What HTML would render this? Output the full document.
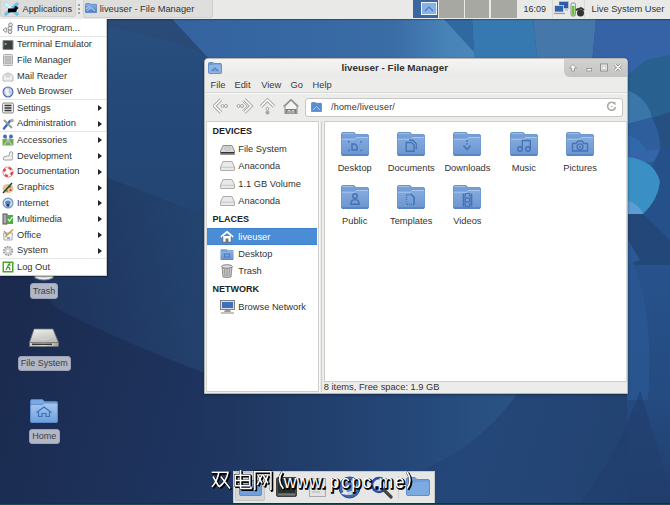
<!DOCTYPE html>
<html><head><meta charset="utf-8">
<style>
*{margin:0;padding:0;box-sizing:border-box}
html,body{width:670px;height:505px;overflow:hidden}
body{position:relative;font-family:"Liberation Sans",sans-serif;background:#1f3358;color:#3a3a3a}
.abs{position:absolute}
#wall{position:absolute;left:0;top:0;width:670px;height:505px}
/* panel */
#panel{position:absolute;left:0;top:0;width:670px;height:19px;background:#e9e9e7;box-shadow:0 1px 1px rgba(0,0,0,0.25)}
.t{position:absolute;white-space:nowrap;font-size:9px;line-height:11px}
/* menu */
#menu{position:absolute;left:0;top:19px;width:107px;height:257px;background:#fff;border-right:1px solid #c8c8c8;border-bottom:1px solid #c8c8c8;box-shadow:1px 1px 1px rgba(0,0,0,0.3)}
.mi{position:absolute;left:17px;font-size:9.3px;line-height:11px;color:#333;white-space:nowrap}
.sep{position:absolute;left:0;width:106px;height:1px;background:#e6e6e6}
.arr{position:absolute;left:98px;width:0;height:0;border-top:3px solid transparent;border-bottom:3px solid transparent;border-left:4px solid #222}
/* window */
#win{position:absolute;left:204px;top:58px;width:424px;height:336px;background:#ececeb;border:1px solid #b5b5b3;border-radius:4px 4px 0 0;box-shadow:0 1px 3px rgba(0,0,0,0.35)}
.lbl{position:absolute;font-size:9.3px;line-height:11px;color:#333;white-space:nowrap;text-align:center}
.dlab{position:absolute;background:#b1b7c6;border:1px solid #9aa1b4;border-radius:3px;font-size:9px;line-height:13px;color:#3e3e3e;text-align:center;white-space:nowrap}
</style></head><body>
<svg id="wall" viewBox="0 0 670 505">
 <defs>
  <linearGradient id="g0" x1="0" y1="0" x2="0.25" y2="1">
   <stop offset="0" stop-color="#2b5288"/><stop offset="0.45" stop-color="#254675"/><stop offset="1" stop-color="#1e3056"/>
  </linearGradient>
  <linearGradient id="gtop" x1="0" y1="0" x2="1" y2="0">
   <stop offset="0" stop-color="#3463a0"/><stop offset="0.7" stop-color="#3a6ca6"/><stop offset="0.86" stop-color="#4783b7"/><stop offset="1" stop-color="#4a88ba"/>
  </linearGradient>
  <radialGradient id="gbr" cx="560" cy="385" r="560" gradientUnits="userSpaceOnUse" gradientTransform="translate(560,385) scale(1,0.75) translate(-560,-385)">
   <stop offset="0" stop-color="#2b5688"/><stop offset="0.3" stop-color="#25487a"/><stop offset="0.62" stop-color="#1f3560"/><stop offset="1" stop-color="#1a2a4e"/>
  </radialGradient>
  <linearGradient id="grs" x1="0" y1="0" x2="0" y2="1"><stop offset="0" stop-color="#27528b"/><stop offset="0.5" stop-color="#254c82"/><stop offset="1" stop-color="#203d6c"/></linearGradient>
  <linearGradient id="gb1" x1="0" y1="300" x2="670" y2="505" gradientUnits="userSpaceOnUse"><stop offset="0" stop-color="#1b2a4e"/><stop offset="0.35" stop-color="#1e3560"/><stop offset="0.7" stop-color="#244779"/><stop offset="1" stop-color="#22426f"/></linearGradient>
  <linearGradient id="gb2" x1="230" y1="0" x2="556" y2="0" gradientUnits="userSpaceOnUse"><stop offset="0" stop-color="#1f3760"/><stop offset="0.6" stop-color="#25497b"/><stop offset="1" stop-color="#2c5988"/></linearGradient>
  <linearGradient id="glf" x1="0" y1="19" x2="0" y2="280" gradientUnits="userSpaceOnUse"><stop offset="0" stop-color="#2a4a78"/><stop offset="1" stop-color="#22436f"/></linearGradient>
  <linearGradient id="glf2" x1="0" y1="27" x2="0" y2="280" gradientUnits="userSpaceOnUse"><stop offset="0" stop-color="#284f7e"/><stop offset="0.35" stop-color="#244877"/><stop offset="1" stop-color="#224372"/></linearGradient>
  <clipPath id="cpb"><rect x="205" y="394" width="422" height="111"/></clipPath>
  <linearGradient id="gwd" x1="30" y1="300" x2="205" y2="260" gradientUnits="userSpaceOnUse"><stop offset="0" stop-color="#1e3259"/><stop offset="0.5" stop-color="#203a65"/><stop offset="1" stop-color="#23446f"/></linearGradient>
  <linearGradient id="gbot" x1="0" y1="0" x2="1" y2="0">
   <stop offset="0" stop-color="#213a66"/><stop offset="0.6" stop-color="#264a7b"/><stop offset="1" stop-color="#2b5a8e"/>
  </linearGradient>
 </defs>
 <rect width="670" height="505" fill="url(#g0)"/>
 <!-- top strip -->
 <polygon points="172,19 444,19 481,58 490,120 208,120 208,58" fill="url(#gtop)"/>
 <polygon points="107,19 172,19 208,58 208,280 107,280" fill="url(#glf)"/>
 <path d="M107,27 Q160,36 200,52 L208,58 L208,280 L107,280 Z" fill="url(#glf2)"/>
 <polygon points="444,19 472,19 474,52" fill="#3068a2"/>
 <polygon points="472,19 533,19 544,120 481,120 474,52" fill="#3579b0"/>
 <polygon points="533,19 596,19 587,120 544,120" fill="#4677aa"/>
 <polygon points="596,19 670,19 670,38 642,58 628,120 587,120" fill="#3563a5"/>
 <polygon points="670,38 670,120 628,120 642,58" fill="#27578a"/>
 <!-- right strip -->
 <rect x="627" y="55" width="43" height="210" fill="#28608f"/>
 <polygon points="627,55 670,38 670,55 646,60 627,76" fill="#3563a8"/>
 <path d="M627,90 Q648,98 652,118 L627,124 Z" fill="#3a77a8"/>
 <polygon points="627,124 670,112 670,160 627,160" fill="#2e5f9c"/>
 <path d="M652,118 Q662,135 660,160 L670,160 L670,112 Z" fill="#264f82"/>
 <path d="M627,135 Q645,140 650,160 L627,160 Z" fill="#3068ac"/>
 <rect x="627" y="150" width="33" height="12" fill="#3565a8"/>
 <polygon points="660,150 670,150 670,265 627,265 627,215" fill="#25508a"/>
 <path d="M627,157 Q655,160 660,182 Q658,200 643,214 L627,214 Z" fill="#3a90c4"/>
 <path d="M627,200 Q640,205 643,214 Q638,228 627,238 Z" fill="#5c9dd4"/>
 <polygon points="627,214 643,214 670,240 670,265 627,265" fill="#24477a"/>
 <polygon points="627,238 640,260 627,265" fill="#2a5a95"/>
 <!-- bottom -->
 <path d="M0,276 L107,276 L107,178 Q160,198 205,217 L205,394 L627,394 L627,505 L0,505 Z" fill="url(#gb1)"/>
 <circle cx="340" cy="270" r="216" fill="url(#gb2)" clip-path="url(#cpb)"/>
 <path d="M627,265 L670,265 L670,505 L627,505 Z" fill="url(#grs)"/>
 <path d="M627,250 Q655,300 648,400 L627,400 Z" fill="#2b5892" opacity="0.8"/>
 <path d="M640,390 Q620,450 579,505 L670,505 L670,490 Z" fill="#213d6c" opacity="0.6"/>
 <path d="M107,178 Q160,198 205,217 L205,373 Q130,345 63,312 Q45,300 30,276 L107,276 Z" fill="url(#gwd)"/>
 
</svg>

<!-- top panel -->
<div id="panel">
 <div class="abs" style="left:0;top:0;width:76px;height:17px;background:#dcdcda;border:1px solid #d0d0ce;border-top:none;border-radius:0 0 3px 3px"></div>
 <svg class="abs" style="left:3px;top:2px" width="17" height="14" viewBox="0 0 17 14">
  <path d="M3,2 L14,12 M14,2 L3,12" stroke="#66c4ec" stroke-width="3.4" stroke-linecap="round"/>
  <path d="M3,2 L7,5.5" stroke="#d8f2fc" stroke-width="3" stroke-linecap="round"/>
  <path d="M5,6.5 L11,6.5 L12,4 L14,4.5 L15.5,6 L14,7.5 L13,10 L5,10.5 Z" fill="#000"/>
 </svg>
 <div class="t" style="left:22.5px;top:3.5px;color:#333;font-size:9.2px">Applications</div>
 <div class="abs" style="left:78px;top:4px;width:2px;height:2px;background:#a0a09e"></div>
 <div class="abs" style="left:78px;top:8px;width:2px;height:2px;background:#a0a09e"></div>
 <div class="abs" style="left:78px;top:12px;width:2px;height:2px;background:#a0a09e"></div>
 <div class="abs" style="left:83px;top:0;width:130px;height:17.5px;background:#dededc;border:1px solid #d0d0ce;border-top:none;border-radius:0 0 3px 3px"></div>
 <svg class="abs" style="left:85px;top:3px" width="12" height="10" viewBox="0 0 12 10"><defs><linearGradient id="tbf" x1="0" y1="0" x2="0" y2="1"><stop offset="0" stop-color="#8ab4e8"/><stop offset="1" stop-color="#4a80c8"/></linearGradient></defs><path d="M0.5,1.2 Q0.5,0.5 1.2,0.5 L4.5,0.5 L5.5,1.3 L11,1.3 Q11.5,1.3 11.5,2 L11.5,9.5 L0.5,9.5 Z" fill="url(#tbf)" stroke="#3f70b6" stroke-width="0.6"/><path d="M2,8 L6,4.5 L10,8 M1,6 L5,3" stroke="#c4dcf6" stroke-width="0.9" fill="none"/></svg>
 <div class="t" style="left:99.8px;top:3.5px;color:#333;font-size:9.3px">liveuser - File Manager</div>
 <!-- workspaces -->
 <div class="abs" style="left:413px;top:0;width:25px;height:18px;background:#3b679e"></div>
 <div class="abs" style="left:421px;top:1.5px;width:16px;height:13px;background:#86b2e6;border:1px solid #e8f2ff"></div>
 <svg class="abs" style="left:424px;top:4px" width="10" height="8" viewBox="0 0 10 8"><path d="M1,7 L5,3 L9,7" stroke="#4a7cc0" stroke-width="1.2" fill="none"/></svg>
 <div class="abs" style="left:438.5px;top:0;width:25.5px;height:18px;background:#a8a8a3"></div>
 <div class="abs" style="left:465px;top:0;width:24px;height:18px;background:#a8a8a3"></div>
 <div class="abs" style="left:490.5px;top:0;width:26.5px;height:18px;background:#a8a8a3"></div>
 <div class="t" style="left:523.5px;top:3.5px;color:#333">16:09</div>
 <div class="abs" style="left:552px;top:0;width:33px;height:18px;border-left:1px solid #d8d8d6;border-right:1px solid #d8d8d6;background:#e9e9e8"></div>
 <svg class="abs" style="left:554px;top:1px" width="15" height="14" viewBox="0 0 15 14">
  <rect x="5" y="0.5" width="9.5" height="7" fill="#2a5aa8" stroke="#ccc" stroke-width="0.6"/>
  <rect x="0.5" y="4.5" width="9" height="6.5" fill="#2f62b0" stroke="#ddd" stroke-width="0.8"/>
  <path d="M0,12.5 h11" stroke="#999" stroke-width="1.2"/><path d="M11,9 h3" stroke="#aaa" stroke-width="1"/>
 </svg>
 <svg class="abs" style="left:570px;top:1.5px" width="15" height="15" viewBox="0 0 15 15">
  <rect x="1" y="1" width="4.5" height="13" rx="1.5" fill="#e8e8e8" stroke="#777" stroke-width="0.8"/>
  <rect x="2" y="4" width="2.5" height="9.5" fill="#6abf40"/>
  <circle cx="10.5" cy="11" r="3.5" fill="#333"/><path d="M6,8 L11,6 L14,8" stroke="#333" stroke-width="2" fill="none"/>
 </svg>
 <div class="t" style="left:591.5px;top:3.5px;color:#333;font-size:9.3px">Live System User</div>
</div>

<!--DESK-->
<!-- Trash icon bottom (peeking below menu) -->
<svg class="abs" style="left:33px;top:266px" width="22" height="15" viewBox="0 0 22 15"><path d="M1,0 L21,0 L20,12 Q11,16 2,12 Z" fill="#d6d6d4" stroke="#8a8a88" stroke-width="0.8"/><path d="M4,11 Q11,14 18,11" stroke="#f4f4f4" stroke-width="1.2" fill="none"/></svg>
<div class="dlab" style="left:30px;top:283px;width:28px;height:15.5px;line-height:15px">Trash</div>
<!-- File System drive -->
<svg class="abs" style="left:29px;top:328px" width="30" height="19" viewBox="0 0 30 19">
 <defs><linearGradient id="dtop" x1="0" y1="0" x2="0.4" y2="1"><stop offset="0" stop-color="#f4f4f2"/><stop offset="1" stop-color="#bdbdb9"/></linearGradient>
 <linearGradient id="dfr" x1="0" y1="0" x2="1" y2="0"><stop offset="0" stop-color="#c8c8c4"/><stop offset="0.5" stop-color="#f0f0ee"/><stop offset="1" stop-color="#9a9a96"/></linearGradient></defs>
 <path d="M5,1 L24,1 L29.5,14.5 L0.5,14.5 Z" fill="url(#dtop)" stroke="#6f6f6c" stroke-width="0.8"/>
 <ellipse cx="15" cy="8" rx="7" ry="3.5" fill="none" stroke="#d8d8d6" stroke-width="0.8"/>
 <rect x="0.5" y="14.5" width="29" height="4" fill="url(#dfr)" stroke="#6f6f6c" stroke-width="0.6"/>
 <rect x="3" y="15.5" width="20" height="1.6" fill="#3a3a38"/>
</svg>
<div class="dlab" style="left:17.5px;top:355.5px;width:53.5px;height:15px">File System</div>
<!-- Home folder -->
<svg class="abs" style="left:30px;top:398.5px" width="28" height="24" viewBox="0 0 28 24">
 <defs><linearGradient id="hgf" x1="0" y1="0" x2="0" y2="1"><stop offset="0" stop-color="#a6c8f0"/><stop offset="1" stop-color="#6d9fdc"/></linearGradient></defs>
 <path d="M0.5,2 Q0.5,0.5 2,0.5 L12.5,0.5 L14.5,2.5 L26.5,2.5 Q27.5,2.5 27.5,4 L27.5,22 Q27.5,23.5 26,23.5 L2,23.5 Q0.5,23.5 0.5,22 Z" fill="#7aa8e0" stroke="#5a88c8" stroke-width="0.8"/>
 <path d="M0.5,7 Q0.5,5.5 2,5.5 L12.5,5.5 L14.5,4 L26,4 Q27.5,4 27.5,5.5 L27.5,22 Q27.5,23.5 26,23.5 L2,23.5 Q0.5,23.5 0.5,22 Z" fill="url(#hgf)" stroke="#5a88c8" stroke-width="0.8"/>
 <path d="M6.5,13.5 L14,8 L21.5,13.5" fill="none" stroke="#3f70b8" stroke-width="1.2"/>
 <path d="M8.5,12.5 V17.5 H12 V14.5 H16 V17.5 H19.5 V12.5" fill="none" stroke="#3f70b8" stroke-width="1.2"/>
</svg>
<div class="dlab" style="left:28.5px;top:428.5px;width:31.5px;height:15px">Home</div>
<!--/DESK-->

<!--WIN-->
<div id="win">
 <!-- title bar -->
 <div class="abs" style="left:0;top:0;width:422px;height:18px;background:linear-gradient(#f4f4f3,#e9e9e8);border-radius:3px 3px 0 0"></div>
 <svg class="abs" style="left:3px;top:3px" width="14" height="12" viewBox="0 0 14 12"><path d="M0.5,1.5 Q0.5,0.5 1.5,0.5 L5,0.5 L6,1.5 L12.5,1.5 Q13.5,1.5 13.5,2.5 L13.5,10.5 Q13.5,11.5 12.5,11.5 L1.5,11.5 Q0.5,11.5 0.5,10.5 Z" fill="#6f9ad2" stroke="#5282c0" stroke-width="0.8"/><path d="M1,4 Q1,3 2,3 L5,3 L6,2.5 L13,2.5 L13,11 L1,11 Z" fill="#8fb4e4"/><path d="M3.5,9 L7,6 L10.5,9" stroke="#4f7fc0" stroke-width="1.1" fill="none"/><path d="M5,9.5 L7,7.8 L9,9.5" stroke="#4f7fc0" stroke-width="0.8" fill="none"/></svg>
 <div class="t" style="left:136.5px;top:3px;font-weight:bold;font-size:9.9px;color:#333">liveuser - File Manager</div>
 <div class="abs" style="left:359px;top:0;width:63px;height:18px;background:linear-gradient(#d2d2d0,#c4c4c2);border-radius:0 3px 0 6px"></div>
 <svg class="abs" style="left:362px;top:4px" width="56" height="10" viewBox="0 0 56 10">
  <path d="M6,1.5 L9.5,5 L7.3,5 L7.3,8 L4.7,8 L4.7,5 L2.5,5 Z" fill="#fff" stroke="#8a8a88" stroke-width="0.8"/>
  <rect x="20" y="5.5" width="4.5" height="2.5" fill="#fff" stroke="#8a8a88" stroke-width="0.8"/>
  <rect x="33.5" y="1" width="7" height="7" fill="#f2f2f2" stroke="#8a8a88" stroke-width="0.9"/><rect x="35" y="3" width="4" height="3.5" fill="none" stroke="#aaa" stroke-width="0.6"/>
  <path d="M48,1.5 L54,7.5 M54,1.5 L48,7.5" stroke="#8a8a88" stroke-width="2.6"/><path d="M48,1.5 L54,7.5 M54,1.5 L48,7.5" stroke="#fff" stroke-width="1.3"/>
 </svg>
 <!-- menubar -->
 <div class="t" style="left:5.5px;top:21px;font-size:9.3px">File</div>
 <div class="t" style="left:29.5px;top:21px;font-size:9.3px">Edit</div>
 <div class="t" style="left:56.2px;top:21px;font-size:9.3px">View</div>
 <div class="t" style="left:85.5px;top:21px;font-size:9.3px">Go</div>
 <div class="t" style="left:107.5px;top:21px;font-size:9.3px">Help</div>
 <div class="abs" style="left:0;top:33px;width:422px;height:1px;background:#d8d8d6"></div>
 <div class="abs" style="left:0;top:34px;width:422px;height:1px;background:#f8f8f8"></div>
 <!-- toolbar icons -->
 <svg class="abs" style="left:8px;top:39px" width="96" height="18" viewBox="0 0 96 18">
  <g fill="none" stroke-linejoin="miter" stroke-linecap="butt">
   <g stroke="#a6a6a4" stroke-width="3.4">
    <path d="M8,1.5 L1.5,8 L8,14.5"/>
    <path d="M31.5,1.5 L38,8 L31.5,14.5"/>
    <path d="M48,8.5 L54.5,2 L61,8.5"/>
   </g>
   <g stroke="#fbfbfb" stroke-width="1.6">
    <path d="M8,1.5 L1.5,8 L8,14.5"/>
    <path d="M31.5,1.5 L38,8 L31.5,14.5"/>
    <path d="M48,8.5 L54.5,2 L61,8.5"/>
   </g>
   <path d="M29.5,3.5 L34,8 L29.5,12.5" stroke="#b4b4b2" stroke-width="1"/>
  </g>
  <g fill="#f8f8f8" stroke="#9c9c9a" stroke-width="0.9">
   <circle cx="9.5" cy="8" r="1.5"/><circle cx="13" cy="8" r="1.5"/>
   <circle cx="25.5" cy="8" r="1.5"/><circle cx="29" cy="8" r="1.5"/>
   <circle cx="54.5" cy="10.8" r="1.4"/><circle cx="54.5" cy="14.5" r="1.6" fill="#aaa"/>
  </g>
  <path d="M72,8 L78,2 L84,8 L84,15.5 L72,15.5 Z" fill="#f4f4f4" stroke="#9c9c9a" stroke-width="1.2" stroke-linejoin="round"/>
  <path d="M70.5,8.5 L78,1.5 L85.5,8.5" fill="none" stroke="#8f8f8d" stroke-width="1.2"/>
  <rect x="72.5" y="11" width="11" height="4.5" fill="#7a7a78"/>
  <path d="M75,15.5 V12.5 H77 V15.5 M79,15.5 V12.5 H81 V15.5" fill="none" stroke="#eee" stroke-width="0.8"/>
 </svg>
 <!-- address bar -->
 <div class="abs" style="left:100px;top:39px;width:318px;height:19px;background:#fff;border:1px solid #c6c6c3;border-radius:3px"></div>
 <svg class="abs" style="left:106px;top:43px" width="11" height="10" viewBox="0 0 11 10"><path d="M0.5,1.2 Q0.5,0.5 1.2,0.5 L4,0.5 L5,1.3 L10,1.3 Q10.5,1.3 10.5,2 L10.5,9.5 L0.5,9.5 Z" fill="#5b8fd4" stroke="#3f70b6" stroke-width="0.6"/><path d="M2,8 L5.5,4.5 L9,8" stroke="#a9c6ee" stroke-width="1" fill="none"/></svg>
 <div class="t" style="left:126px;top:43px;color:#333;letter-spacing:0.2px">/home/liveuser/</div>
 <svg class="abs" style="left:401px;top:42px" width="11" height="11" viewBox="0 0 11 11"><path d="M8.5,2.5 A4,4 0 1 0 9.5,6" fill="none" stroke="#aaa" stroke-width="1.6"/><path d="M6,1 L9.5,1 L9.5,4.5 Z" fill="#aaa"/><path d="M5,5.5 l1.5,0" stroke="#aaa" stroke-width="1.2"/></svg>
 <!-- sidebar -->
 <div class="abs" style="left:1px;top:62px;width:113px;height:271px;background:#fff;border:1px solid #cdcdca;border-left:1px solid #d8d8d6"></div>
 <div class="abs" style="left:114px;top:62px;width:1px;height:271px;background:#fafafa"></div>
 <div class="abs" style="left:116px;top:62px;width:1px;height:271px;background:#cfcfcc"></div>
 <div class="abs" style="left:119px;top:62px;width:303px;height:261px;background:#fff;border:1px solid #cdcdca;border-right:1px solid #d8d8d6"></div>
 <div class="t" style="left:118.8px;top:323.3px;color:#333;font-size:9.3px">8 items, Free space: 1.9 GB</div>
<svg width="0" height="0" style="position:absolute">
<defs>
 <linearGradient id="fgf" x1="0" y1="0" x2="0" y2="1"><stop offset="0" stop-color="#86acde"/><stop offset="1" stop-color="#6a95d0"/></linearGradient>
 <linearGradient id="fgb" x1="0" y1="0" x2="0" y2="1"><stop offset="0" stop-color="#7aa2d8"/><stop offset="1" stop-color="#5d8bc9"/></linearGradient>
 <symbol id="fold" viewBox="0 0 28 24">
  <path d="M0.5,2 Q0.5,0.5 2,0.5 L13,0.5 L15.2,2.6 L26.3,2.6 Q27.5,2.6 27.5,4 L27.5,22.2 Q27.5,23.5 26.2,23.5 L1.8,23.5 Q0.5,23.5 0.5,22.2 Z" fill="url(#fgb)" stroke="#5684c4" stroke-width="0.8"/>
  <path d="M1.5,1.6 L12.8,1.6" stroke="#a9c7ee" stroke-width="0.8"/>
  <path d="M0.5,6.8 L13.5,6.8 L15.5,5 L27.5,5 L27.5,22.2 Q27.5,23.5 26.2,23.5 L1.8,23.5 Q0.5,23.5 0.5,22.2 Z" fill="url(#fgf)"/>
  <path d="M1,7.2 L13.6,7.2 L15.6,5.5 L27,5.5" stroke="#b2cdf0" stroke-width="0.8" fill="none"/>
  <path d="M1,23 L27,23" stroke="#4674b6" stroke-width="1"/>
 </symbol>
</defs></svg>
<svg class="abs" style="left:135.7px;top:72.8px" width="28" height="24" viewBox="0 0 28 24"><use href="#fold"/><path d="M11,12 h3 l2,2 v4 h-5 Z" fill="none" stroke="#4673b6" stroke-width="1.4"/><g fill="#4673b6"><rect x="7" y="9" width="1.6" height="1.6"/><rect x="19.4" y="9" width="1.6" height="1.6"/><rect x="7" y="17.6" width="1.6" height="1.6"/><rect x="19.4" y="17.6" width="1.6" height="1.6"/></g></svg>
<div class="lbl" style="left:119.7px;top:104.1px;width:60px">Desktop</div>
<svg class="abs" style="left:192.2px;top:72.8px" width="28" height="24" viewBox="0 0 28 24"><use href="#fold"/><path d="M9.2,10.5 h5.3 l2.5,2.5 v6.3 h-7.8 Z" fill="none" stroke="#4673b6" stroke-width="1.4"/><path d="M12,8 h3.5 l3.8,3.8 v5.5" fill="none" stroke="#4673b6" stroke-width="1.3"/></svg>
<div class="lbl" style="left:176.2px;top:104.1px;width:60px">Documents</div>
<svg class="abs" style="left:248.4px;top:72.8px" width="28" height="24" viewBox="0 0 28 24"><use href="#fold"/><path d="M10.5,13.5 L14,17.5 L17.5,13.5" fill="none" stroke="#4673b6" stroke-width="1.6"/><rect x="13.2" y="8.2" width="1.6" height="1.6" fill="#4673b6"/><rect x="13.2" y="11" width="1.6" height="1.6" fill="#4673b6"/></svg>
<div class="lbl" style="left:232.4px;top:104.1px;width:60px">Downloads</div>
<svg class="abs" style="left:304.8px;top:72.8px" width="28" height="24" viewBox="0 0 28 24"><use href="#fold"/><circle cx="10" cy="17" r="2.3" fill="none" stroke="#4673b6" stroke-width="1.4"/><circle cx="18" cy="17" r="2.3" fill="none" stroke="#4673b6" stroke-width="1.4"/><path d="M12.3,17 V8.5 H20.3 V17" fill="none" stroke="#4673b6" stroke-width="1.4"/></svg>
<div class="lbl" style="left:288.8px;top:104.1px;width:60px">Music</div>
<svg class="abs" style="left:361.1px;top:72.8px" width="28" height="24" viewBox="0 0 28 24"><use href="#fold"/><path d="M6.5,11.5 h3.5 l2,-2.5 h4 l2,2.5 h3.5 v7.5 h-15 Z" fill="none" stroke="#4673b6" stroke-width="1.4"/><circle cx="14" cy="14.8" r="3" fill="none" stroke="#4673b6" stroke-width="1.3"/><circle cx="14" cy="14.8" r="1.1" fill="#4673b6"/></svg>
<div class="lbl" style="left:345.1px;top:104.1px;width:60px">Pictures</div>
<svg class="abs" style="left:135.7px;top:125.6px" width="28" height="24" viewBox="0 0 28 24"><use href="#fold"/><circle cx="14" cy="11" r="2.3" fill="none" stroke="#4673b6" stroke-width="1.4"/><path d="M9.8,19.3 Q9.8,14.6 14,14.6 Q18.2,14.6 18.2,19.3 Z" fill="none" stroke="#4673b6" stroke-width="1.4"/></svg>
<div class="lbl" style="left:119.7px;top:156.9px;width:60px">Public</div>
<svg class="abs" style="left:192.2px;top:125.6px" width="28" height="24" viewBox="0 0 28 24"><use href="#fold"/><path d="M9.5,9.5 h4.8 l2.8,2.8 v7.2 h-7.6 Z" fill="none" stroke="#4673b6" stroke-width="1.3" stroke-dasharray="1.1 0.9"/><path d="M13.8,9.5 h0.5 l2.8,2.8 v7.2" fill="none" stroke="#4673b6" stroke-width="1.4"/></svg>
<div class="lbl" style="left:176.2px;top:156.9px;width:60px">Templates</div>
<svg class="abs" style="left:248.4px;top:125.6px" width="28" height="24" viewBox="0 0 28 24"><use href="#fold"/><path d="M10.5,8.5 v13 M18.5,8.5 v13" stroke="#4673b6" stroke-width="1.6"/><path d="M10.5,11 h2 v-2.5 h4 v2.5 h2 M10.5,19 h2 v2.5 h4 v-2.5 h2" fill="none" stroke="#4673b6" stroke-width="1.2"/><rect x="12.2" y="13" width="4.6" height="4" fill="none" stroke="#4673b6" stroke-width="1.3"/></svg>
<div class="lbl" style="left:232.4px;top:156.9px;width:60px">Videos</div>
<div class="t" style="left:7.5px;top:67.4px;font-weight:bold;color:#222">DEVICES</div>
<div class="t" style="left:7.5px;top:155.2px;font-weight:bold;color:#222">PLACES</div>
<div class="t" style="left:7.5px;top:224.9px;font-weight:bold;color:#222">NETWORK</div>
<div class="abs" style="left:2px;top:169px;width:110px;height:17px;background:#4a8dd6;border-top:1px solid #3f82d0;border-bottom:1px solid #3f82d0"></div>
<div class="t" style="left:33.3px;top:85.1px;font-size:9.3px;color:#333">File System</div>
<div class="t" style="left:33.3px;top:102.2px;font-size:9.3px;color:#333">Anaconda</div>
<div class="t" style="left:33.3px;top:119.8px;font-size:9.3px;color:#333">1.1 GB Volume</div>
<div class="t" style="left:33.3px;top:136.6px;font-size:9.3px;color:#333">Anaconda</div>
<div class="t" style="left:33.3px;top:173.2px;font-size:9.3px;color:#fff">liveuser</div>
<div class="t" style="left:33.3px;top:189.9px;font-size:9.3px;color:#333">Desktop</div>
<div class="t" style="left:33.3px;top:206.9px;font-size:9.3px;color:#333">Trash</div>
<div class="t" style="left:33.3px;top:242.9px;font-size:9.3px;color:#333">Browse Network</div>
<svg class="abs" style="left:14.7px;top:86.0px" width="15" height="10" viewBox="0 0 15 10"><path d="M3,0.5 L12,0.5 L14.5,6 L14.5,9 Q14.5,9.5 14,9.5 L1,9.5 Q0.5,9.5 0.5,9 L0.5,6 Z" fill="#d8d8d6" stroke="#777" stroke-width="0.8"/><path d="M0.8,7.8 L14.2,7.8" stroke="#333" stroke-width="1.6"/><ellipse cx="7.5" cy="3.5" rx="3" ry="1.6" fill="none" stroke="#aaa" stroke-width="0.6"/></svg>
<svg class="abs" style="left:14.7px;top:102.3px" width="15" height="10" viewBox="0 0 15 10"><path d="M3,0.5 L12,0.5 L14.5,6 L14.5,9 Q14.5,9.5 14,9.5 L1,9.5 Q0.5,9.5 0.5,9 L0.5,6 Z" fill="#e9e9e9" stroke="#9a9a9a" stroke-width="0.8"/><path d="M0.8,6.3 L14.2,6.3" stroke="#bbb" stroke-width="0.8"/></svg>
<svg class="abs" style="left:14.7px;top:119.9px" width="15" height="10" viewBox="0 0 15 10"><path d="M3,0.5 L12,0.5 L14.5,6 L14.5,9 Q14.5,9.5 14,9.5 L1,9.5 Q0.5,9.5 0.5,9 L0.5,6 Z" fill="#e9e9e9" stroke="#9a9a9a" stroke-width="0.8"/><path d="M0.8,6.3 L14.2,6.3" stroke="#bbb" stroke-width="0.8"/></svg>
<svg class="abs" style="left:14.7px;top:136.7px" width="15" height="10" viewBox="0 0 15 10"><path d="M3,0.5 L12,0.5 L14.5,6 L14.5,9 Q14.5,9.5 14,9.5 L1,9.5 Q0.5,9.5 0.5,9 L0.5,6 Z" fill="#e9e9e9" stroke="#9a9a9a" stroke-width="0.8"/><path d="M0.8,6.3 L14.2,6.3" stroke="#bbb" stroke-width="0.8"/></svg>
<svg class="abs" style="left:15px;top:172px" width="14" height="12" viewBox="0 0 14 12"><path d="M1,6 L7,0.8 L13,6" fill="none" stroke="#fff" stroke-width="1.8"/><path d="M2.8,5 L2.8,11.2 L11.2,11.2 L11.2,5" fill="#fff" stroke="#555" stroke-width="0.7"/><rect x="5.5" y="7.5" width="3" height="3.7" fill="#777"/></svg>
<svg class="abs" style="left:15px;top:189.5px" width="14" height="11" viewBox="0 0 28 22"><use href="#fold"/><rect x="9" y="10" width="10" height="6" fill="none" stroke="#3d6cb0" stroke-width="1.5"/></svg>
<svg class="abs" style="left:16px;top:205.39999999999998px" width="12" height="14" viewBox="0 0 12 14"><path d="M1,2.5 L11,2.5 L10,13 Q6,14 2,13 Z" fill="#c9c9c9" stroke="#777" stroke-width="0.8"/><ellipse cx="6" cy="2.5" rx="5.3" ry="1.8" fill="#ddd" stroke="#666" stroke-width="0.8"/><path d="M3.5,5 L4,12 M6,5 L6,12.5 M8.5,5 L8,12" stroke="#888" stroke-width="0.8"/></svg>
<svg class="abs" style="left:14.5px;top:241px" width="15" height="14" viewBox="0 0 15 14"><rect x="0.5" y="0.5" width="14" height="9" fill="#ddd" stroke="#666" stroke-width="0.8"/><rect x="2" y="2" width="11" height="6" fill="#3f6fb8"/><path d="M5,10 L10,10 L11,12 L4,12 Z" fill="#999"/><path d="M1,13 L14,13" stroke="#888" stroke-width="1"/></svg>
</div>
<!--/WIN-->

<!--MENU-->
<div id="menu">
<svg class="abs" style="left:2px;top:3.2px" width="12" height="12" viewBox="0 0 12 12"><circle cx="8.5" cy="2.8" r="1.8" fill="#eee" stroke="#888" stroke-width="1"/><circle cx="8" cy="6.3" r="2" fill="#eee" stroke="#888" stroke-width="1"/><circle cx="8" cy="9.8" r="1.8" fill="#eee" stroke="#888" stroke-width="1"/><path d="M1,8 L4,5.5 L5,8 L4,10.5 Z" fill="#eee" stroke="#888" stroke-width="0.9"/></svg>
<div class="mi" style="top:3.9px">Run Program...</div>
<svg class="abs" style="left:2px;top:19.5px" width="12" height="12" viewBox="0 0 12 12"><rect x="0.5" y="1" width="11" height="10" rx="1" fill="#8a8a88"/><rect x="1.5" y="2" width="9" height="8" fill="#39423d"/><path d="M2.5,4 l2,1 l-2,1" stroke="#bbb" stroke-width="0.8" fill="none"/></svg>
<div class="mi" style="top:20.2px">Terminal Emulator</div>
<svg class="abs" style="left:2px;top:35.3px" width="12" height="12" viewBox="0 0 12 12"><rect x="1.5" y="0.5" width="9" height="11" rx="1" fill="#e4e4e4" stroke="#aaa"/><rect x="3" y="2.5" width="6" height="3" fill="#c4c4c4" stroke="#999" stroke-width="0.5"/><rect x="3" y="6.8" width="6" height="3" fill="#c4c4c4" stroke="#999" stroke-width="0.5"/></svg>
<div class="mi" style="top:36.0px">File Manager</div>
<svg class="abs" style="left:2px;top:51.0px" width="12" height="12" viewBox="0 0 12 12"><path d="M1,6 Q6,0 11,6 L11,11 L1,11 Z" fill="#eee" stroke="#bbb"/><circle cx="6" cy="5" r="2" fill="#ddd" stroke="#bbb" stroke-width="0.6"/></svg>
<div class="mi" style="top:51.7px">Mail Reader</div>
<svg class="abs" style="left:2px;top:66.5px" width="12" height="12" viewBox="0 0 12 12"><circle cx="6" cy="6" r="5.5" fill="#4a6fae"/><circle cx="6" cy="6" r="4.4" fill="#b6c8e4"/><path d="M3,3 Q5,2 7,3.5 L6.5,6 L8.5,9 L5,10 L3.5,7 Z" fill="#f0f0f0"/><path d="M8,2.5 Q10,4 9.5,6 L8.5,5 Z" fill="#eee"/></svg>
<div class="mi" style="top:67.2px">Web Browser</div>
<svg class="abs" style="left:2px;top:83.0px" width="12" height="12" viewBox="0 0 12 12"><rect x="0.5" y="1" width="11" height="10" rx="1.5" fill="#eee" stroke="#888"/><path d="M2.5,3.5 h7 M2.5,6 h7 M2.5,8.5 h7" stroke="#333" stroke-width="1.3"/></svg>
<div class="mi" style="top:83.7px">Settings</div><div class="arr" style="top:86.3px"></div>
<svg class="abs" style="left:2px;top:98.5px" width="12" height="12" viewBox="0 0 12 12"><path d="M2,10.5 L8,3" stroke="#3a6fc0" stroke-width="2.5" stroke-linecap="round"/><path d="M2,2 L10,10" stroke="#999" stroke-width="2"/><circle cx="10" cy="2.5" r="1.8" fill="#aaa"/></svg>
<div class="mi" style="top:99.2px">Administration</div><div class="arr" style="top:101.8px"></div>
<svg class="abs" style="left:2px;top:115.0px" width="12" height="12" viewBox="0 0 12 12"><rect x="0.5" y="5" width="11" height="6.5" fill="#6ab04c"/><path d="M2,11 L9,3 M10,11 L3,3" stroke="#bbb" stroke-width="1.5"/><circle cx="3" cy="2.5" r="2" fill="#3f6fb8"/><circle cx="9" cy="2.5" r="2" fill="#3f6fb8"/></svg>
<div class="mi" style="top:115.7px">Accessories</div><div class="arr" style="top:118.3px"></div>
<svg class="abs" style="left:2px;top:131.0px" width="12" height="12" viewBox="0 0 12 12"><path d="M1,9 Q1,6 5,6 L7,6 L8,2 Q10,1 11,3 L10,6 Q11,9 10,10 L2,10 Z" fill="#f2f2f2" stroke="#999" stroke-width="0.9"/></svg>
<div class="mi" style="top:131.7px">Development</div><div class="arr" style="top:134.3px"></div>
<svg class="abs" style="left:2px;top:146.5px" width="12" height="12" viewBox="0 0 12 12"><circle cx="6" cy="6" r="5.2" fill="#f0f0f0" stroke="#d33" stroke-width="0.5"/><circle cx="6" cy="6" r="4" fill="none" stroke="#e04040" stroke-width="2.2" stroke-dasharray="3.1 3.2"/><circle cx="6" cy="6" r="1.7" fill="#fff"/></svg>
<div class="mi" style="top:147.2px">Documentation</div><div class="arr" style="top:149.8px"></div>
<svg class="abs" style="left:2px;top:162.5px" width="12" height="12" viewBox="0 0 12 12"><ellipse cx="6" cy="6.5" rx="5.5" ry="4.5" fill="#e3c48a"/><circle cx="8" cy="5" r="1" fill="#3a6fc0"/><circle cx="8.5" cy="8" r="1" fill="#d33"/><circle cx="5" cy="9" r="1" fill="#5a5"/><path d="M1,11 L10,1" stroke="#333" stroke-width="1.4"/></svg>
<div class="mi" style="top:163.2px">Graphics</div><div class="arr" style="top:165.8px"></div>
<svg class="abs" style="left:2px;top:178.0px" width="12" height="12" viewBox="0 0 12 12"><circle cx="6" cy="6" r="5.5" fill="#6f94c8"/><circle cx="6" cy="6" r="4.3" fill="#d6e0ee"/><path d="M3,5 Q6,2 9,5 L7,9 L4,9 Z" fill="#5b82b8"/><circle cx="6" cy="8.5" r="1.4" fill="#1d3d78"/></svg>
<div class="mi" style="top:178.7px">Internet</div><div class="arr" style="top:181.3px"></div>
<svg class="abs" style="left:2px;top:194.0px" width="12" height="12" viewBox="0 0 12 12"><rect x="0.5" y="0.5" width="5" height="11" fill="#555"/><rect x="1.5" y="1.5" width="3" height="9" fill="#aaa"/><path d="M5,2 L11,2 L11,11 L5,11 Z" fill="#4caf3c"/><path d="M6,6 l1.5,2 l3,-4" stroke="#fff" stroke-width="1.2" fill="none"/></svg>
<div class="mi" style="top:194.7px">Multimedia</div><div class="arr" style="top:197.3px"></div>
<svg class="abs" style="left:2px;top:210.0px" width="12" height="12" viewBox="0 0 12 12"><path d="M1.5,4 L10.5,4 L10,11 L2,11 Z" fill="#f4f4f4" stroke="#999" stroke-width="0.8"/><path d="M3,8 L11,0.5" stroke="#e09a2a" stroke-width="1.5"/><path d="M2,2 L5,6" stroke="#888" stroke-width="1.2"/><rect x="5" y="8" width="3" height="2" fill="#7ab0e0"/></svg>
<div class="mi" style="top:210.7px">Office</div><div class="arr" style="top:213.3px"></div>
<svg class="abs" style="left:2px;top:225.5px" width="12" height="12" viewBox="0 0 12 12"><circle cx="6" cy="6" r="4.2" fill="#ddd" stroke="#999" stroke-width="1.8" stroke-dasharray="1.6 1"/><circle cx="6" cy="6" r="2" fill="#fff" stroke="#aaa" stroke-width="0.6"/></svg>
<div class="mi" style="top:226.2px">System</div><div class="arr" style="top:228.8px"></div>
<svg class="abs" style="left:2px;top:242.0px" width="12" height="12" viewBox="0 0 12 12"><rect x="0.5" y="0.5" width="11" height="11" fill="#4aa52e"/><rect x="2" y="2" width="8" height="8" fill="#fff"/><path d="M4,9 L5.5,6 L7.5,7 L8,9 M5.5,6 L6.5,3.5 L8.5,4.5" stroke="#3c9a26" stroke-width="1.2" fill="none"/><circle cx="7.5" cy="2.8" r="0.9" fill="#3c9a26"/></svg>
<div class="mi" style="top:242.7px">Log Out</div>
<div class="sep" style="top:17.0px"></div>
<div class="sep" style="top:80.0px"></div>
<div class="sep" style="top:112.3px"></div>
<div class="sep" style="top:239.0px"></div>
</div>
<!--/MENU-->
<!--DOCK-->
<div class="abs" style="left:233px;top:471px;width:202px;height:34px;background:#e6e6e4;border:1px solid #c8c8c6;border-bottom:none"></div>
<div class="abs" style="left:235px;top:472px;width:30px;height:29px;background:#d6d6d4;border:1px solid #c4c4c2;border-radius:2px"></div>
<svg class="abs" style="left:239px;top:480px" width="23" height="16" viewBox="0 0 23 16"><rect x="0.5" y="0.5" width="22" height="15" rx="1.5" fill="#6f9fdc" stroke="#4f80c4" stroke-width="0.8"/><rect x="1.5" y="1.5" width="20" height="3" fill="#9cc0ee"/></svg>
<svg class="abs" style="left:276px;top:477px" width="21" height="20" viewBox="0 0 21 20"><rect x="0.5" y="0.5" width="20" height="19" rx="1.5" fill="#4a4d4b" stroke="#2c2c2c" stroke-width="0.8"/><rect x="2" y="2" width="17" height="14" fill="#26312c"/><rect x="2" y="16.5" width="17" height="2" fill="#777"/></svg>
<svg class="abs" style="left:309px;top:478px" width="17" height="19" viewBox="0 0 17 19"><rect x="0.5" y="0.5" width="16" height="18" fill="#e2e2e0" stroke="#9a9a98" stroke-width="0.8"/><path d="M3,5 h11 M3,8 h11 M3,11 h11 M3,14 h8" stroke="#b4b4b2" stroke-width="1.2"/></svg>
<svg class="abs" style="left:338px;top:476px" width="23" height="23" viewBox="0 0 23 23"><circle cx="11.5" cy="11.5" r="10.5" fill="#3e68b0" stroke="#28488a" stroke-width="1"/><circle cx="11.5" cy="11.5" r="7.5" fill="#c8d8f0"/><path d="M6,8 Q11,4 16,8 L14,15 L8,16 Z" fill="#5680c0"/><path d="M3,18 L8,13 L10,19" fill="#e8e8e8"/></svg>
<svg class="abs" style="left:370px;top:476px" width="23" height="23" viewBox="0 0 23 23"><circle cx="9" cy="9" r="7" fill="#dfe6f2" stroke="#2f4a9e" stroke-width="2.6"/><path d="M14,14 L21,21" stroke="#444" stroke-width="3.2" stroke-linecap="round"/></svg>
<div class="abs" style="left:398px;top:476px;width:1px;height:23px;background:#cdcdcb"></div>
<svg class="abs" style="left:406px;top:477px" width="24" height="19" viewBox="0 0 24 19"><path d="M0.5,2 Q0.5,0.5 2,0.5 L9,0.5 L11,2.5 L22,2.5 Q23.5,2.5 23.5,4 L23.5,17 Q23.5,18.5 22,18.5 L2,18.5 Q0.5,18.5 0.5,17 Z" fill="#6e9edb" stroke="#4f80c4" stroke-width="0.8"/><rect x="1.2" y="5" width="21.6" height="13" fill="#7eaae2"/></svg>
<div class="abs" style="left:0;top:503px;width:670px;height:1px;background:#1c3035"></div>
<div class="abs" style="left:0;top:504px;width:670px;height:1px;background:#1a4a52"></div>
<!--/DOCK-->
<!--WM-->
<svg class="abs" style="left:205px;top:466px" width="215" height="30" viewBox="0 0 215 30">
 <g id="wmg" fill="none" stroke-linecap="butt" stroke-linejoin="miter">
  <path d="M6.6,6.3 h7.2 q-1.5,9 -7,14.7 M8,10.5 l5.8,10 M14.5,6.3 h8.5 q-1.5,9 -9,14.7 M15.8,10.5 l9.2,12"/>
  <path d="M30.3,9.2 h14.4 v10.5 h-14.4 Z M30.3,14.5 h14.4 M35.5,4 v17.5 q0,1 1,1 h9.5 v-2"/>
  <path d="M49.8,24 V5.7 h16.1 v17.6 l-1.2,0.6 M52.8,9 l4.2,8.3 M57,9 l-4.8,10.1 M58.1,9 l4.8,8.3 M62.9,9 l-4.2,11.3"/>
  <path d="M77.2,6 q-6,8 1.2,16.7"/>
  <path d="M202,6 q6,8.5 0,16.5"/>
 </g>
 <use href="#wmg" x="1.2" y="1.2" stroke="#000" stroke-width="2.4"/>
 <use href="#wmg" stroke="#000" stroke-width="2.2"/>
 <use href="#wmg" stroke="#fff" stroke-width="1.6"/>
 <g font-family="Liberation Sans" font-size="17.5">
  <g fill="#000" stroke="#000" stroke-width="1.5" transform="translate(1,1)">
   <text x="78.8" y="21.6">www.</text>
   <text x="124.6" y="21.6" letter-spacing="1.6">pcpc</text>
   <text x="168.5" y="21.6">.</text>
   <text x="173.6" y="21.6" letter-spacing="1.5">me</text>
  </g>
  <g fill="#fff">
   <text x="78.8" y="21.6">www.</text>
   <text x="124.6" y="21.6" letter-spacing="1.6">pcpc</text>
   <text x="173.6" y="21.6" letter-spacing="1.5">me</text>
  </g>
 </g>
</svg>
<!--/WM-->

</body></html>
